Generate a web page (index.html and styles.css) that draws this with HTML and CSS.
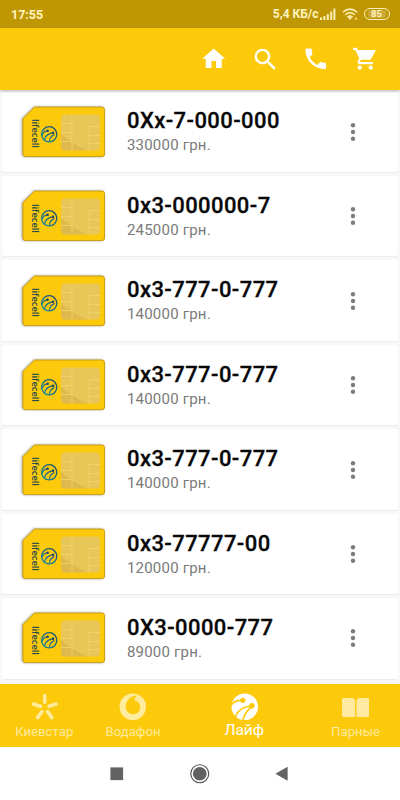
FILE: index.html
```html
<!DOCTYPE html>
<html lang="ru">
<head>
<meta charset="utf-8">
<title>Лайф</title>
<link rel="stylesheet" href="styles.css">
</head>
<body>
<svg class="defs" aria-hidden="true">
  <defs>
    <linearGradient id="blue" x1="0" y1="1" x2="1" y2="0"><stop offset="0" stop-color="#128fa8"/><stop offset="1" stop-color="#17456a"/></linearGradient>
  </defs>
  <symbol id="sim" viewBox="0 0 88 56">
    <path d="M14.500 3H82a2.600 2.600 0 0 1 2.600 2.600V50A2.600 2.600 0 0 1 82 52.600H5.500A2.600 2.600 0 0 1 2.900 50V14.500z" fill="#fdc90b" stroke="#c69d16" stroke-width="1"/>
    <rect x="41" y="10.500" width="39" height="36" rx="4" fill="#e8c657"/>
    <path d="M41 30q10 9 26 16.500H45a4 4 0 0 1-4-4z" fill="#dfb94b"/>
    <path d="M52 10.500v36M41 19.500h11M41 28.500h11M41 37.500h11M80 22.500H69v24M69 31.500h11M69 39.500h11" fill="none" stroke="#f0d473" stroke-width=".8"/>
    <g fill="none" stroke="url(#blue)" stroke-linecap="round">
      <circle cx="29.200" cy="30.300" r="7.600" stroke-width="1.300"/>
      <path d="M22.300 31q.5-3.200 4.500-4M24.800 35.500q.2-4.300 6.500-6.400M29.500 36.500q.5-4 4.500-5.800" stroke-width="1.200"/>
    </g>
    <g fill="#17456a"><circle cx="27.600" cy="26.700" r="1.300"/><circle cx="33" cy="28.800" r="1.300"/></g>
  </symbol>
  <symbol id="more" viewBox="0 0 6 20"><circle cx="3" cy="3.300" r="2.200"/><circle cx="3" cy="10" r="2.200"/><circle cx="3" cy="16.700" r="2.200"/></symbol>
</svg>
<header class="status">
  <span class="time">17:55</span>
  <span class="speed">5,4 КБ/с</span>
  <svg class="signal" viewBox="0 0 16 12"><path d="M0 9.500h2V12H0zM3.400 8h2v4h-2zM6.800 6h2v6h-2zM10.200 3.500h2V12h-2zM13.400.5h2V12h-2z"/></svg>
  <svg class="wifi" viewBox="0 0 16 12"><path d="M.8 4.200Q8-2 15.200 4.200M3.200 6.800Q8 2.600 12.800 6.800M5.400 9.100Q8 7 10.600 9.100" fill="none" stroke="#fff0b5" stroke-width="1.500"/><path d="M6 9.800Q8 8.200 10 9.800L8 12z" fill="#fff0b5"/><circle cx="14" cy="10.700" r="1.300" fill="#f4cb61"/></svg>
  <span class="battery"><b>85</b></span>
</header>
<div class="toolbar">
  <svg viewBox="0 0 24 24"><path d="M10 20v-6h4v6h5v-8h3L12 3 2 12h3v8z"/></svg>
  <svg class="search" viewBox="0 0 24 24"><path d="M15.500 14h-.79l-.28-.27A6.470 6.470 0 0 0 16 9.500 6.500 6.500 0 1 0 9.500 16c1.610 0 3.090-.59 4.230-1.570l.27.28v.79l5 4.990L20.490 19l-4.990-5zm-6 0C7.010 14 5 11.990 5 9.500S7.010 5 9.500 5 14 7.010 14 9.500 11.990 14 9.500 14z"/></svg>
  <svg viewBox="0 0 24 24"><path d="M6.620 10.790c1.440 2.830 3.760 5.140 6.590 6.590l2.200-2.200c.27-.27.67-.36 1.020-.24 1.120.37 2.330.57 3.570.57.55 0 1 .45 1 1V20c0 .55-.45 1-1 1-9.390 0-17-7.610-17-17 0-.55.45-1 1-1h3.500c.55 0 1 .45 1 1 0 1.250.2 2.450.57 3.570.11.35.03.74-.25 1.020l-2.200 2.200z"/></svg>
  <svg class="cart" viewBox="0 0 24 24"><path d="M7 18c-1.100 0-1.990.9-1.990 2S5.900 22 7 22s2-.9 2-2-.9-2-2-2zM1 2v2h2l3.600 7.590-1.350 2.450c-.16.28-.25.61-.25.96 0 1.100.9 2 2 2h12v-2H7.420c-.14 0-.25-.11-.25-.25l.03-.12.900-1.630h7.450c.75 0 1.410-.41 1.750-1.030L21.700 4H5.210l-.94-2H1zm16 16c-1.100 0-1.990.9-1.990 2s.89 2 1.990 2 2-.9 2-2-.9-2-2-2z"/></svg>
</div>
<main class="list">
  <article class="card"><div class="sim"><svg><use href="#sim"/></svg><span>lifecell</span></div><div class="info"><h2>0Xx-7-000-000</h2><p>330000 грн.</p></div><svg class="more"><use href="#more"/></svg></article>
  <article class="card"><div class="sim"><svg><use href="#sim"/></svg><span>lifecell</span></div><div class="info"><h2>0x3-000000-7</h2><p>245000 грн.</p></div><svg class="more"><use href="#more"/></svg></article>
  <article class="card"><div class="sim"><svg><use href="#sim"/></svg><span>lifecell</span></div><div class="info"><h2>0x3-777-0-777</h2><p>140000 грн.</p></div><svg class="more"><use href="#more"/></svg></article>
  <article class="card"><div class="sim"><svg><use href="#sim"/></svg><span>lifecell</span></div><div class="info"><h2>0x3-777-0-777</h2><p>140000 грн.</p></div><svg class="more"><use href="#more"/></svg></article>
  <article class="card"><div class="sim"><svg><use href="#sim"/></svg><span>lifecell</span></div><div class="info"><h2>0x3-777-0-777</h2><p>140000 грн.</p></div><svg class="more"><use href="#more"/></svg></article>
  <article class="card"><div class="sim"><svg><use href="#sim"/></svg><span>lifecell</span></div><div class="info"><h2>0x3-77777-00</h2><p>120000 грн.</p></div><svg class="more"><use href="#more"/></svg></article>
  <article class="card"><div class="sim"><svg><use href="#sim"/></svg><span>lifecell</span></div><div class="info"><h2>0X3-0000-777</h2><p>89000 грн.</p></div><svg class="more"><use href="#more"/></svg></article>
</main>
<nav class="tabs">
  <div class="tab"><svg viewBox="0 0 28 28"><path d="M14 2.500v7M2.500 11.200l7 2.300M25.500 11.200l-7 2.300M6.800 25l4.400-6M21.200 25l-4.400-6" fill="none" stroke="#ffeb9c" stroke-width="3.700" stroke-linecap="round"/></svg><span>Киевстар</span></div>
  <div class="tab"><svg viewBox="0 0 28 28"><path fill-rule="evenodd" d="M14 .5a13.500 13.500 0 1 0 0 27 13.500 13.500 0 0 0 0-27zM19.500 2.500c-2.500.8-4 2.800-3.800 5 3.600.8 5.800 3.500 5.800 6.900 0 4-3.200 7.100-7.200 7.100-4.300 0-7.500-3.400-7.500-7.700C6.800 7.500 12 2.200 19.500 2.500z" fill="#ffeb9c"/></svg><span>Водафон</span></div>
  <div class="tab active"><svg viewBox="0 0 28 28"><circle cx="14" cy="14" r="13.500" fill="#fff"/><path d="M0 12.500Q3.500 7 12 7.500M4.500 24Q9 13.500 20.500 13.500M12 28Q14 19 22 13.500" fill="none" stroke="#fdc90b" stroke-width="1.700"/><g fill="#fdc90b"><circle cx="12" cy="7.500" r="2.700"/><circle cx="21.300" cy="13" r="2.700"/></g></svg><span>Лайф</span></div>
  <div class="tab"><svg viewBox="0 0 28 28"><path d="M1.500 5H11l2.300 2.500V24.500H1.500A1.500 1.500 0 0 1 0 23V6.500A1.500 1.500 0 0 1 1.500 5zM17 5h9.500A1.500 1.500 0 0 1 28 6.500V23a1.500 1.500 0 0 1-1.500 1.500H14.700V7.500z" fill="#ffeaa2"/></svg><span>Парные</span></div>
</nav>
<footer class="system">
  <svg viewBox="0 0 24 24"><path d="M5.500 5.500h13v13h-13z"/></svg>
  <svg viewBox="0 0 24 24"><circle cx="12" cy="12" r="9.200" fill="none" stroke="#555" stroke-width="1.200"/><circle cx="12" cy="12" r="7"/></svg>
  <svg viewBox="0 0 24 24"><path d="M5.500 12 18 4.800v14.400z"/></svg>
</footer>
</body>
</html>
```
FILE: styles.css
```css
* { box-sizing: border-box; }
body { margin: 0; width: 400px; height: 800px; overflow: hidden; display: flex; flex-direction: column; font-family: Roboto, sans-serif; background: #fff; }
.defs { position: absolute; width: 0; height: 0; }
svg { flex: none; display: block; }
.status { flex: none; height: 28px; background: #bf9705; color: #fff3bf; display: flex; align-items: center; padding: 0 10.500px 0 11px; }
.time { flex: 1; font-size: 12.500px; font-weight: 700; }
.speed { font-size: 12px; font-weight: 700; }
.signal { width: 16px; height: 12px; margin-left: 1px; fill: #fff0b5; }
.wifi { width: 16px; height: 12px; margin: 0 6px; }
.battery { width: 26px; height: 12px; border: 1.500px solid #fff0b5; border-radius: 6px; padding: 1px 3px; display: flex; }
.battery b { flex: 1; border-radius: 3px; background: #cda93a; font-size: 9.500px; line-height: 8px; text-align: center; }
.toolbar { flex: none; height: 62px; background: #fdc90b; display: flex; justify-content: flex-end; align-items: center; gap: 23px; padding-right: 22px; box-shadow: 0 1px 3px rgba(0,0,0,.28); z-index: 1; }
.toolbar svg { width: 27.500px; height: 27.500px; fill: #fff; }
.toolbar .search { width: 29px; height: 29px; margin-right: -1px; }
.toolbar .cart { width: 26.500px; margin-left: -.5px; }
.list { flex: none; height: 594px; background: #f8f8f8; padding: 1.600px 2px 0; display: flex; flex-direction: column; gap: 4px; overflow: hidden; }
.card { flex: none; height: 80.450px; background: #fff; border-radius: 2px; box-shadow: 0 1px 1px rgba(0,0,0,.05); display: flex; align-items: center; padding-left: 18.200px; }
.sim { display: grid; width: 88px; height: 56px; }
.sim svg { grid-area: 1 / 1; width: 88px; height: 56px; filter: drop-shadow(-.5px .5px 1px rgba(0,0,0,.3)); }
.sim span { grid-area: 1 / 1; justify-self: start; align-self: start; z-index: 1; margin: 15.500px 0 0 9px; writing-mode: vertical-rl; font: 600 9.500px/12px "Open Sans", sans-serif; letter-spacing: -.1px; color: #264b50; }
.info { width: 221px; margin-left: 18.800px; }
h2 { margin: 0; font-size: 22px; line-height: 26px; font-weight: 500; letter-spacing: .42px; color: #080808; -webkit-text-stroke: .3px #080808; }
p { margin: 0; padding-top: 1px; font-size: 15px; line-height: 20px; letter-spacing: .2px; color: #7a7a7a; }
.more { width: 6px; height: 20px; margin-left: 2.300px; fill: #7c7c7c; }
.tabs { flex: none; height: 63px; background: #fdc90b; display: grid; grid-template-columns: 88.500px 89px 133.500px 89px; }
.tab { display: flex; flex-direction: column; align-items: center; padding-top: 9px; color: #ffeb9c; font-size: 13.200px; line-height: 16px; }
.tab svg { width: 27.500px; height: 27.500px; }
.tab span { margin-top: 3px; }
.active { color: #fff; font-size: 15.500px; }
.active span { margin-top: 1px; }
.system { flex: 1; display: flex; justify-content: center; align-items: center; gap: 59px; padding-right: 1px; background: #fff; }
.system svg { width: 23.500px; height: 23.500px; fill: #626262; }
```
